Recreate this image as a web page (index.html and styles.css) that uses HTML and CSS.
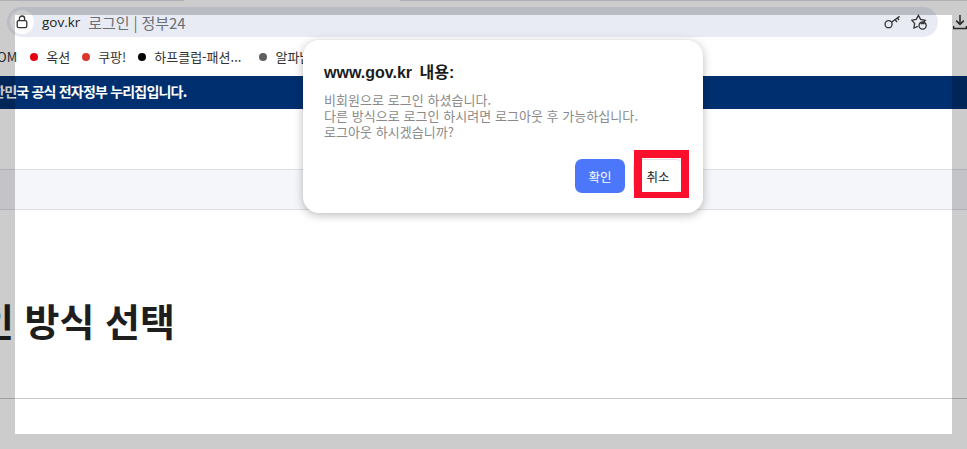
FILE: index.html
```html
<!DOCTYPE html>
<html lang="ko">
<head>
    <meta charset="UTF-8">
    <meta name="viewport" content="width=device-width, initial-scale=1.0">
    <title>gov.kr 로그인 | 정부24</title>
    <link rel="stylesheet" href="styles.css">
</head>
<body>
    <div class="browser-top">
        <div class="tab-strip"></div>
        <div class="address-row">
            <div class="omnibox">
                <span class="lock-badge">
                    <svg width="12" height="14" viewBox="0 0 12 14" fill="none" stroke="#333" stroke-width="1.3">
                        <rect x="1.2" y="5.7" width="9.6" height="7" rx="1.4"/>
                        <path d="M3.4 5.6V3.6a2.6 2.6 0 0 1 5.2 0v2"/>
                    </svg>
                </span>
                <span class="omnibox-host">gov.kr</span>
                <span class="omnibox-title">로그인 | 정부24</span>
                <span class="omnibox-actions">
                    <svg width="17" height="14" viewBox="0 0 17 14" fill="none" stroke="#333" stroke-width="1.3">
                        <circle cx="4.6" cy="9.2" r="3.5"/>
                        <path d="M7.4 7.2 15.6 1.4M11 4.6l2 2.4M13.4 3l1.6 2"/>
                    </svg>
                    <svg width="17" height="17" viewBox="0 0 17 17" fill="none" stroke="#333" stroke-width="1.3">
                        <path d="M6.8 12.4 3 14l.6-4.6L.8 6.2l4.4-.8L7.4 1.4l2.2 4 4.6.9-1.6 1.7"/>
                        <circle cx="11.6" cy="11.6" r="3.6"/>
                        <path d="M9.6 9.6h4"/>
                    </svg>
                </span>
            </div>
            <svg class="download-icon" width="14" height="16" viewBox="0 0 14 16" fill="none" stroke="#333" stroke-width="1.5">
                <path d="M7 1v9M3.2 6.6 7 10.4l3.8-3.8M.6 12v2.6h12.8V12"/>
            </svg>
        </div>
        <div class="bookmarks">
            <span class="bookmark bookmark-cut">OM</span>
            <span class="bookmark"><i class="dot dot-red"></i>옥션</span>
            <span class="bookmark"><i class="dot dot-coral"></i>쿠팡!</span>
            <span class="bookmark bookmark-long"><i class="dot dot-black"></i>하프클럽-패션...</span>
            <span class="bookmark"><i class="dot dot-gray"></i>알파남</span>
        </div>
    </div>

    <div class="gov-banner">
        <span>대한민국 공식 전자정부 누리집입니다.</span>
    </div>
    <div class="site-header"></div>
    <div class="site-nav"></div>
    <div class="page-title-area">
        <h1>로그인 방식 선택</h1>
    </div>
    <div class="page-body"></div>

    <div class="capture-frame"></div>

    <div class="dialog">
        <h2>www.gov.kr 내용:</h2>
        <p>비회원으로 로그인 하셨습니다.<br>다른 방식으로 로그인 하시려면 로그아웃 후 가능하십니다.<br>로그아웃 하시겠습니까?</p>
        <div class="button-group">
            <button class="ok-button">확인</button>
            <button class="cancel-button">취소</button>
        </div>
        <div class="red-box"></div>
    </div>
</body>
</html>
```

FILE: styles.css
```css
* {
    box-sizing: border-box;
}

body {
    margin: 0;
    width: 967px;
    height: 449px;
    overflow: hidden;
    position: relative;
    background: #ffffff;
    font-family: "Noto Sans CJK KR", "Noto Sans", sans-serif;
    color: #222222;
}

.browser-top {
    height: 76px;
    background: #ffffff;
}

.tab-strip {
    height: 7px;
    background: linear-gradient(90deg, #dadce2 184px, #ffffff 184px, #ffffff 400px, #dadce2 400px) no-repeat;
    background-size: 100% 1px;
}

.address-row {
    display: flex;
    align-items: center;
    height: 30px;
}

.omnibox {
    display: flex;
    align-items: center;
    width: 931px;
    height: 30px;
    margin-left: 7px;
    padding-left: 3px;
    border-radius: 15px;
    background: #e8ebf3;
}

.lock-badge {
    display: flex;
    align-items: center;
    justify-content: center;
    width: 24px;
    height: 24px;
    border-radius: 50%;
    background: #ffffff;
}

.omnibox-host {
    margin-left: 8px;
    font-family: "Open Sans", sans-serif;
    font-size: 13.5px;
    color: #222222;
}

.omnibox-title {
    margin-left: 8px;
    font-size: 15px;
    letter-spacing: -0.1px;
    color: #6b6f76;
}

.omnibox-actions {
    display: flex;
    align-items: center;
    gap: 10px;
    margin-left: auto;
    padding-right: 10px;
}

.download-icon {
    margin-left: 15px;
}

.bookmarks {
    display: flex;
    align-items: center;
    height: 39px;
    margin-left: -3px;
    font-size: 13px;
    color: #333333;
}

.bookmark {
    display: flex;
    align-items: center;
    margin-right: 12px;
    white-space: nowrap;
}

.bookmark-cut {
    margin-right: 13px;
}

.bookmark-long {
    margin-right: 18px;
}

.dot {
    width: 8px;
    height: 8px;
    margin-right: 8px;
    border-radius: 50%;
}

.dot-red { background: #e60012; }
.dot-coral { background: #d9372e; }
.dot-black { background: #000000; }
.dot-gray { background: #5f5f5f; }

.gov-banner {
    height: 33px;
    line-height: 31px;
    background: #002f6f;
    color: #ffffff;
    font-size: 14px;
    font-weight: 700;
    letter-spacing: -0.8px;
    white-space: nowrap;
    overflow: hidden;
}

.gov-banner span {
    margin-left: -20px;
}

.site-header {
    height: 61px;
    border-bottom: 1px solid #dcdfe8;
}

.site-nav {
    height: 40px;
    border-bottom: 1px solid #dcdfe8;
    background: #f5f6fa;
}

.page-title-area {
    height: 189px;
    border-bottom: 1px solid #c9c9c9;
    overflow: hidden;
}

h1 {
    margin: 85px 0 0 -91px;
    font-size: 38px;
    line-height: 50px;
    font-weight: 700;
    color: #1e1e1e;
    white-space: nowrap;
}

.capture-frame {
    position: absolute;
    top: 0;
    left: 0;
    width: 967px;
    height: 449px;
    border: 15px solid rgba(0, 0, 0, 0.2);
}

.dialog {
    position: absolute;
    top: 40px;
    left: 303px;
    width: 400px;
    height: 173px;
    padding: 22px 20px 0 21px;
    border-radius: 16px;
    background: #ffffff;
    box-shadow: 0 2px 10px rgba(0, 0, 0, 0.28);
}

.dialog h2 {
    margin: 0;
    font-family: "Liberation Sans", "Noto Sans CJK KR", sans-serif;
    font-size: 16px;
    line-height: 22px;
    font-weight: 700;
    word-spacing: 3px;
    color: #1b1b1b;
}

.dialog p {
    margin: 8px 0 0;
    font-size: 13px;
    letter-spacing: 0.05px;
    line-height: 16px;
    color: #8a8a8a;
}

.button-group {
    display: flex;
    justify-content: flex-end;
    gap: 8px;
    margin-top: 19px;
}

.ok-button, .cancel-button {
    width: 50px;
    height: 34px;
    padding: 0;
    font-family: inherit;
    font-size: 12.5px;
    border-radius: 7px;
}

.ok-button {
    border: none;
    background: #4d77fb;
    color: #ffffff;
}

.cancel-button {
    border: 1px solid #e2e2e2;
    background: #ffffff;
    color: #222222;
}

.red-box {
    position: absolute;
    top: 110px;
    left: 331px;
    width: 55px;
    height: 48px;
    border: 8px solid #fa0f2d;
    border-bottom-width: 6px;
}
```
